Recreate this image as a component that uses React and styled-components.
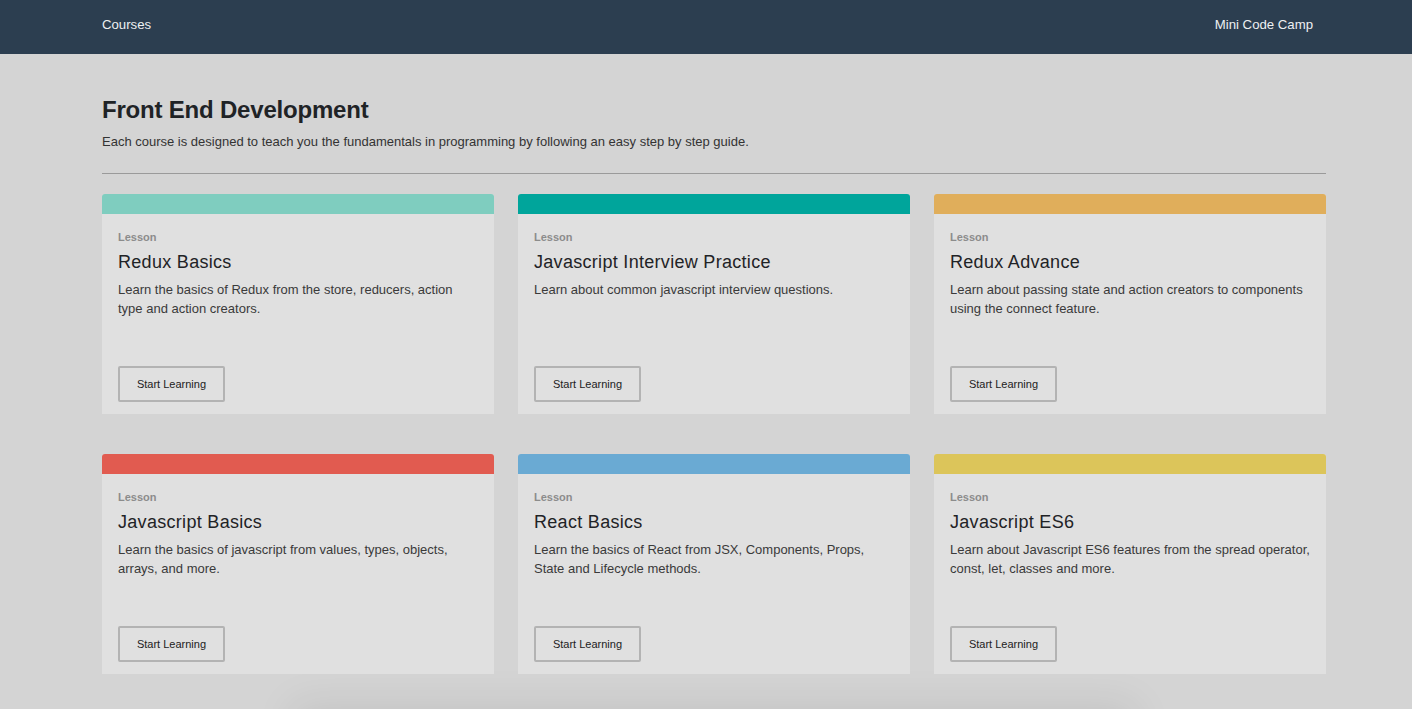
import styled, { createGlobalStyle } from 'styled-components';

const GlobalStyle = createGlobalStyle`
  body {
    margin: 0;
    background: #d4d4d4;
    font-family: "Liberation Sans", Arial, sans-serif;
    color: #222;
  }
`;

const NavBar = styled.nav`
  height: 54px;
  box-sizing: border-box;
  background: #2c3e50;
  display: flex;
  align-items: center;
  justify-content: space-between;
  padding: 0 99px 6px 102px;
`;

const NavLink = styled.a`
  color: #eef0f2;
  font-size: 13.2px;
  text-decoration: none;
`;

const Main = styled.main`
  width: 1224px;
  margin: 0 0 0 102px;
  padding-top: 40px;
`;

const Heading = styled.h1`
  margin: 0;
  font-size: 24px;
  font-weight: 700;
  letter-spacing: -0.2px;
  color: #1f2326;
  line-height: 32px;
`;

const Subtitle = styled.p`
  margin: 7px 0 0;
  font-size: 13px;
  color: #333;
  line-height: 18px;
`;

const Divider = styled.hr`
  margin: 22px 0 20px;
  border: none;
  border-top: 1px solid #9a9a9a;
`;

const CardGrid = styled.div`
  display: grid;
  grid-template-columns: repeat(3, 1fr);
  column-gap: 24px;
  row-gap: 40px;
`;

const Card = styled.div`
  background: #e0e0e0;
  border-radius: 3px 3px 0 0;
  display: flex;
  flex-direction: column;
  height: 220px;
`;

const CardTop = styled.div`
  height: 20px;
  border-radius: 3px 3px 0 0;
  background: ${(p) => p.color};
`;

const CardBody = styled.div`
  flex: 1;
  display: flex;
  flex-direction: column;
  padding: 16px 16px 12px 16px;
`;

const Label = styled.div`
  font-size: 11px;
  font-weight: 700;
  color: #8c8c8c;
  line-height: 14px;
`;

const CardTitle = styled.h2`
  margin: 7px 0 0;
  font-size: 18px;
  font-weight: 400;
  letter-spacing: 0.3px;
  color: #1f2326;
  line-height: 22px;
`;

const CardText = styled.p`
  margin: 7px 0 0;
  font-size: 13px;
  line-height: 19px;
  color: #3a3a3a;
`;

const StartButton = styled.button`
  margin-top: auto;
  align-self: flex-start;
  width: 107px;
  height: 36px;
  background: #e0e0e0;
  border: 2px solid #b3b3b3;
  border-radius: 2px;
  font-family: inherit;
  font-size: 11px;
  color: #222;
  cursor: pointer;
`;

const Footer = styled.footer`
  height: 60px;
  margin: 40px 200px 0;
  box-shadow: 0 0 40px 10px rgba(0, 0, 0, 0.08);
`;

const courses = [
  {
    color: '#7fcdbf',
    title: 'Redux Basics',
    text: 'Learn the basics of Redux from the store, reducers, action type and action creators.',
  },
  {
    color: '#00a59b',
    title: 'Javascript Interview Practice',
    text: 'Learn about common javascript interview questions.',
  },
  {
    color: '#e0ae5b',
    title: 'Redux Advance',
    text: 'Learn about passing state and action creators to components using the connect feature.',
  },
  {
    color: '#e15b50',
    title: 'Javascript Basics',
    text: 'Learn the basics of javascript from values, types, objects, arrays, and more.',
  },
  {
    color: '#6aaad3',
    title: 'React Basics',
    text: 'Learn the basics of React from JSX, Components, Props, State and Lifecycle methods.',
  },
  {
    color: '#dcc55a',
    title: 'Javascript ES6',
    text: 'Learn about Javascript ES6 features from the spread operator, const, let, classes and more.',
  },
];

const App = () => {
  return (
    <>
      <GlobalStyle />
      <NavBar>
        <NavLink href="#">Courses</NavLink>
        <NavLink href="#">Mini Code Camp</NavLink>
      </NavBar>
      <Main>
        <Heading>Front End Development</Heading>
        <Subtitle>
          Each course is designed to teach you the fundamentals in programming by following an easy step by step guide.
        </Subtitle>
        <Divider />
        <CardGrid>
          {courses.map((c) => (
            <Card key={c.title}>
              <CardTop color={c.color} />
              <CardBody>
                <Label>Lesson</Label>
                <CardTitle>{c.title}</CardTitle>
                <CardText>{c.text}</CardText>
                <StartButton>Start Learning</StartButton>
              </CardBody>
            </Card>
          ))}
        </CardGrid>
        <Footer />
      </Main>
    </>
  );
};

export default App;
